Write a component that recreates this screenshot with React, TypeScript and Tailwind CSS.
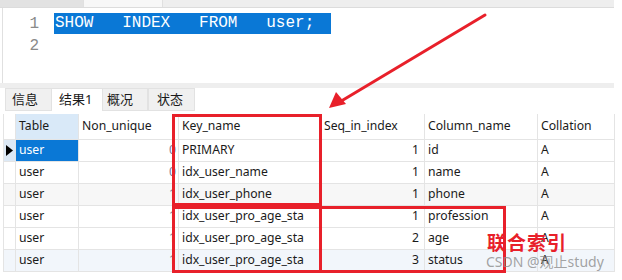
import React from "react";

const rows = [
  { nu: "0", key: "PRIMARY", seq: "1", col: "id", coll: "A", bg: "bg-white" },
  { nu: "0", key: "idx_user_name", seq: "1", col: "name", coll: "A", bg: "bg-white" },
  { nu: "1", key: "idx_user_phone", seq: "1", col: "phone", coll: "A", bg: "bg-[#f7f7f7]" },
  { nu: "1", key: "idx_user_pro_age_sta", seq: "1", col: "profession", coll: "A", bg: "bg-white" },
  { nu: "1", key: "idx_user_pro_age_sta", seq: "2", col: "age", coll: "A", bg: "bg-white" },
  { nu: "1", key: "idx_user_pro_age_sta", seq: "3", col: "status", coll: "A", bg: "bg-[#f2f6fb]" },
];

const cell = "border-r border-b border-[#e4e4e4] px-[3px] flex items-center whitespace-nowrap overflow-hidden";

export default function App() {
  return (
    <div
      className="relative w-[622px] h-[280px] overflow-hidden bg-white text-[#1a1a1a]"
      style={{ fontFamily: '"Noto Sans", "Noto Sans CJK SC", sans-serif' }}
    >
      {/* top tab strip */}
      <div className="flex h-[8px] w-[614px] border-b border-[#dcdcdc]">
        <div className="w-[83px] bg-[#e2e2e2]" />
        <div className="w-[80px] bg-[#f7f7f7] border-x border-[#e0e0e0]" />
        <div className="flex-1 bg-[#eeeeee]" />
      </div>

      {/* editor */}
      <div className="flex h-[75px] w-[612px] border-l border-[#e0e0e0] ml-[2px]">
        <div
          className="w-[51px] flex flex-col items-end pr-[15px] pt-[5px] text-[#8a8a8a] text-[16px] leading-[22px]"
          style={{ fontFamily: '"Liberation Mono", monospace' }}
        >
          <span>1</span>
          <span>2</span>
        </div>
        <div className="pt-[5px]" style={{ fontFamily: '"Liberation Mono", monospace' }}>
          <div className="bg-[#0a78d6] text-white text-[16px] leading-[21px] w-[277px] pl-[1px] whitespace-pre">
            {"SHOW   INDEX   FROM   user;"}
          </div>
        </div>
      </div>

      {/* divider */}
      <div className="h-[5px] w-[614px] bg-[#eeeeee]" />

      {/* tabs */}
      <div className="flex h-[23px] pl-[5px] text-[13px]">
        <div className="w-[47px] bg-[#f0f0f0] border border-[#e2e2e2] flex items-center pl-[6px]">信息</div>
        <div className="w-[50px] bg-white border-t border-[#e2e2e2] flex items-center pl-[7px]">结果1</div>
        <div className="w-[46px] bg-[#f0f0f0] border border-[#e2e2e2] flex items-center pl-[4px]">概况</div>
        <div className="w-[47px] bg-[#f0f0f0] border border-[#e2e2e2] flex items-center pl-[8px]">状态</div>
      </div>

      {/* grid */}
      <div className="mt-[3px] ml-[3px] grid grid-cols-[12px_63px_100px_142px_104px_113px_77px] text-[12.2px] border-l border-[#e4e4e4]">
        <div className="h-[26px] border-r border-b border-[#e4e4e4] bg-white" />
        <div className={`${cell} h-[26px] bg-[#d9e9f8]`}>Table</div>
        <div className={`${cell} h-[26px]`}>Non_unique</div>
        <div className={`${cell} h-[26px]`}>Key_name</div>
        <div className={`${cell} h-[26px]`}>Seq_in_index</div>
        <div className={`${cell} h-[26px]`}>Column_name</div>
        <div className={`${cell} h-[26px]`}>Collation</div>

        {rows.map((r, i) => (
          <React.Fragment key={i}>
            <div className={`border-r border-b border-[#e4e4e4] h-[22px] flex items-center justify-center ${i === 0 ? "bg-[#dce9f6]" : r.bg}`}>
              {i === 0 && (
                <svg width="7" height="11" viewBox="0 0 7 11">
                  <path d="M0 0 L7 5.5 L0 11 Z" fill="#000" />
                </svg>
              )}
            </div>
            <div className={`${cell} h-[22px] ${i === 0 ? "bg-[#0a78d6] text-white" : r.bg}`}>user</div>
            <div className={`${cell} h-[22px] justify-end pr-[2px] text-[#7a7a9a] ${r.bg}`}>{r.nu}</div>
            <div className={`${cell} h-[22px] ${r.bg}`}>{r.key}</div>
            <div className={`${cell} h-[22px] justify-end pr-[5px] ${r.bg}`}>{r.seq}</div>
            <div className={`${cell} h-[22px] ${r.bg}`}>{r.col}</div>
            <div className={`${cell} h-[22px] ${r.bg}`}>{r.coll}</div>
          </React.Fragment>
        ))}
      </div>

      {/* annotations */}
      <div className="absolute left-[172px] top-[114px] w-[150px] h-[92px] border-[3px] border-[#e8202a]" />
      <div className="absolute left-[172px] top-[206px] w-[150px] h-[67px] border-[3px] border-[#e8202a]" />
      <div className="absolute left-[319px] top-[206px] w-[187px] h-[67px] border-[3px] border-[#e8202a]" />

      <svg className="absolute left-0 top-0" width="622" height="280" viewBox="0 0 622 280">
        <line x1="485" y1="15" x2="338" y2="103" stroke="#e8202a" strokeWidth="3" strokeLinecap="round" />
        <path d="M329 108 L336 92 L346 104 Z" fill="#e8202a" />
      </svg>

      <div
        className="absolute left-[487px] top-[232px] text-[19px] font-bold text-[#e8202a] leading-none tracking-[1px]"
        style={{ fontFamily: '"Noto Sans CJK SC", sans-serif' }}
      >
        联合索引
      </div>
      <div
        className="absolute left-[486px] top-[255px] text-[14px] text-[#8c8c8c]/80 leading-none"
        style={{ fontFamily: '"Noto Sans", "Noto Sans CJK SC", sans-serif' }}
      >
        CSDN @观止study
      </div>
    </div>
  );
}
